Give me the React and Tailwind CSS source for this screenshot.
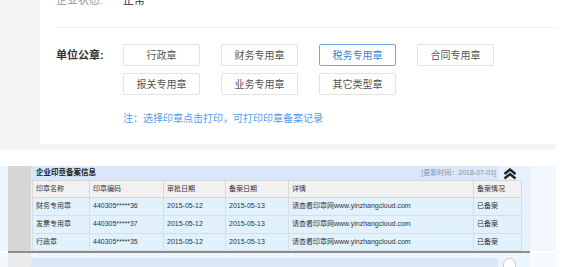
import React from 'react';

const seals = [
  { name: '行政章' },
  { name: '财务专用章' },
  { name: '税务专用章', active: true },
  { name: '合同专用章' },
  { name: '报关专用章' },
  { name: '业务专用章' },
  { name: '其它类型章' },
];

const cols = [
  { label: '印章名称', w: 'w-[57px]' },
  { label: '印章编码', w: 'w-[74px]' },
  { label: '审批日期', w: 'w-[62px]' },
  { label: '备案日期', w: 'w-[63px]' },
  { label: '详情', w: 'w-[185px]' },
  { label: '备案情况', w: 'w-[48px]' },
];

const rows = [
  ['财务专用章', '440305*****36', '2015-05-12', '2015-05-13', '请查看印章网www.yinzhangcloud.com', '已备案'],
  ['发票专用章', '440305*****37', '2015-05-12', '2015-05-13', '请查看印章网www.yinzhangcloud.com', '已备案'],
  ['行政章', '440305*****35', '2015-05-12', '2015-05-13', '请查看印章网www.yinzhangcloud.com', '已备案'],
];

const ChevronsUp = () => (
  <svg width="14" height="12" viewBox="0 0 14 12" fill="none" stroke="#222" strokeWidth="2.4" strokeLinejoin="miter">
    <polyline points="1.5,6 7,1.5 12.5,6" />
    <polyline points="1.5,10.5 7,6 12.5,10.5" />
  </svg>
);

export default function App() {
  return (
    <div className="w-[565px] h-[267px] overflow-hidden bg-white font-['Liberation_Sans','Noto_Sans_CJK_SC',sans-serif]">
      {/* 单位公章 panel */}
      <div className="flex w-[556px] h-[150px] bg-[#f5f5f5] pb-[6px]">
        <div className="w-[40px] shrink-0" />
        <div className="flex-1 bg-white pl-[16px]">
          <div className="h-[28px] border-b border-[#efefef] overflow-hidden">
            <div className="flex -mt-[6px] text-[11px] leading-[12px]">
              <span className="w-[67px] text-[#999]">企业状态:</span>
              <span className="text-[#333]">正常</span>
            </div>
          </div>

          <div className="mt-[16px] flex items-start">
            <div className="w-[67px] shrink-0 text-[11px] leading-[22px] font-bold text-[#333]">单位公章:</div>
            <div className="grid grid-cols-[repeat(4,77px)] gap-x-[21px] gap-y-[7px]">
              {seals.map((s) => (
                <div
                  key={s.name}
                  className={
                    s.active
                      ? 'h-[22px] flex items-center justify-center rounded-[2px] border border-[#72a6e2] text-[10px] text-[#3f7fcf] bg-white'
                      : 'h-[22px] flex items-center justify-center rounded-[2px] border border-[#e2e2e2] text-[10px] text-[#555] bg-white shadow-[0_0_1px_rgba(0,0,0,0.06)]'
                  }
                >
                  {s.name}
                </div>
              ))}
            </div>
          </div>

          <div className="mt-[17px] ml-[67px] text-[10px] leading-[14px] text-[#4f9cf0]">
            注：选择印章点击打印，可打印印章备案记录
          </div>
        </div>
      </div>

      <div className="h-[16px]" />

      {/* 企业印章备案信息 */}
      <div className="flex">
        <div className="w-[8px] bg-[#edf5fd]" />
        <div className="w-[23px] bg-[#d6d6d6]" />
        <div className="w-[499px] bg-[#e5f1fc]">
          <div className="flex h-[14px]">
            <div className="w-[467px] bg-[#d9e7f9] flex items-center justify-between pl-[5px] pr-[2px]">
              <span className="text-[7.5px] font-bold text-[#222]">企业印章备案信息</span>
              <span className="text-[7px] text-[#8492a8]">[更新时间：2018-07-01]</span>
            </div>
            <div className="flex-1 flex items-center pl-[5px] pt-[2px]">
              <ChevronsUp />
            </div>
          </div>
          <table className="ml-[1px] w-[489px] border-collapse table-fixed text-[7px] text-[#333]">
            <thead>
              <tr className="h-[17px] bg-[#f1f1f1]">
                {cols.map((c) => (
                  <th key={c.label} className={`${c.w} border border-[#d6d6d6] pl-[3px] text-left font-normal`}>
                    {c.label}
                  </th>
                ))}
              </tr>
            </thead>
            <tbody>
              {rows.map((r, i) => (
                <tr key={i} className={i === 2 ? 'h-[17px] bg-[#e2f2fd]' : 'h-[18px] bg-[#e2f2fd]'}>
                  {r.map((v, j) => (
                    <td key={j} className="border border-[#d6dde4] pl-[3px]">
                      {v}
                    </td>
                  ))}
                </tr>
              ))}
            </tbody>
          </table>
        </div>
        <div className="w-[26px] bg-[#f3f8fd]" />
      </div>

      <div className="ml-[8px] w-[522px] h-[2px] bg-[#8e8e8e]" />

      <div className="flex h-[20px]">
        <div className="w-[8px] bg-[#f3f8fd]" />
        <div className="w-[23px] bg-[#ebebeb]" />
        <div className="w-[499px] bg-[#eef6fd] pt-[5px] flex">
          <div className="w-[467px] bg-[#d9e7f9]" />
          <div className="flex-1 pl-[5px]">
            <div className="w-[13px] h-[10px] rounded-t-full border border-[#c9c9c9] bg-white" />
          </div>
        </div>
        <div className="w-[26px] bg-[#f8fbfe]" />
      </div>
    </div>
  );
}
